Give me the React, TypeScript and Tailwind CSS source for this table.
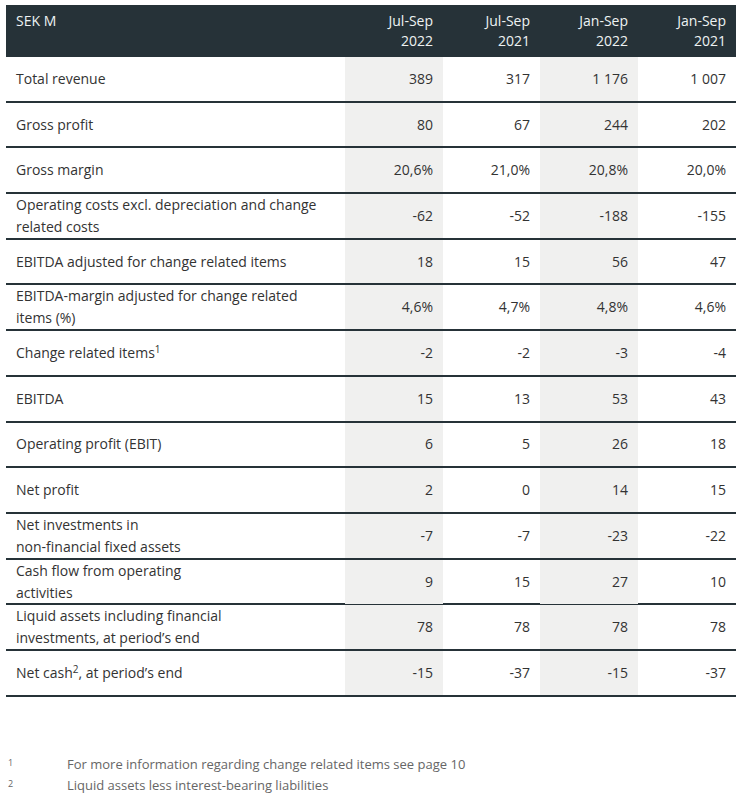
import React from "react";

type Row = { label: React.ReactNode; values: string[] };

const rows: Row[] = [
  { label: "Total revenue", values: ["389", "317", "1 176", "1 007"] },
  { label: "Gross profit", values: ["80", "67", "244", "202"] },
  { label: "Gross margin", values: ["20,6%", "21,0%", "20,8%", "20,0%"] },
  {
    label: (
      <>
        Operating costs excl. depreciation and change
        <br />
        related costs
      </>
    ),
    values: ["-62", "-52", "-188", "-155"],
  },
  { label: "EBITDA adjusted for change related items", values: ["18", "15", "56", "47"] },
  {
    label: (
      <>
        EBITDA-margin adjusted for change related
        <br />
        items (%)
      </>
    ),
    values: ["4,6%", "4,7%", "4,8%", "4,6%"],
  },
  {
    label: (
      <>
        Change related items<sup className="text-[10px]">1</sup>
      </>
    ),
    values: ["-2", "-2", "-3", "-4"],
  },
  { label: "EBITDA", values: ["15", "13", "53", "43"] },
  { label: "Operating profit (EBIT)", values: ["6", "5", "26", "18"] },
  { label: "Net profit", values: ["2", "0", "14", "15"] },
  {
    label: (
      <>
        Net investments in
        <br />
        non-financial fixed assets
      </>
    ),
    values: ["-7", "-7", "-23", "-22"],
  },
  {
    label: (
      <>
        Cash flow from operating
        <br />
        activities
      </>
    ),
    values: ["9", "15", "27", "10"],
  },
  {
    label: (
      <>
        Liquid assets including financial
        <br />
        investments, at period’s end
      </>
    ),
    values: ["78", "78", "78", "78"],
  },
  {
    label: (
      <>
        Net cash<sup className="text-[10px]">2</sup>, at period’s end
      </>
    ),
    values: ["-15", "-37", "-15", "-37"],
  },
];

const headers = [
  ["Jul-Sep", "2022"],
  ["Jul-Sep", "2021"],
  ["Jan-Sep", "2022"],
  ["Jan-Sep", "2021"],
];

const cols = "grid grid-cols-[339px_98px_97px_98px_98px]";

export default function App() {
  return (
    <div
      className="w-[744px] h-[800px] bg-white pt-[5px] pl-[6px] text-[#333]"
      style={{ fontFamily: "'Open Sans', 'Liberation Sans', sans-serif" }}
    >
      <div className="w-[730px]">
        {/* header */}
        <div className={`${cols} h-[52px] bg-[#263238] text-[#eef2f3] text-[14px] leading-[20px]`}>
          <div className="pl-[10px] pt-[6px]">SEK M</div>
          {headers.map((h, i) => (
            <div key={i} className="text-right pr-[10px] pt-[6px]">
              <div>{h[0]}</div>
              <div>{h[1]}</div>
            </div>
          ))}
        </div>

        {/* body */}
        {rows.map((r, i) => (
          <div
            key={i}
            className={`${cols} h-[45.7px] border-b-2 border-[#263238] text-[14px] leading-[22px]`}
          >
            <div className="pl-[10px] flex items-center">
              <div>{r.label}</div>
            </div>
            {r.values.map((v, j) => (
              <div
                key={j}
                className={`flex items-center justify-end pr-[10px] ${
                  j % 2 === 0 ? "bg-[#f0f0ef]" : ""
                }`}
              >
                {v}
              </div>
            ))}
          </div>
        ))}
      </div>

      {/* footnotes */}
      <div className="mt-[57px] text-[13px] leading-[21px] text-[#666]">
        <div className="flex">
          <span className="w-[61px] text-[9px] pl-[2px] -mt-[2px]">1</span>
          <span>For more information regarding change related items see page 10</span>
        </div>
        <div className="flex">
          <span className="w-[61px] text-[9px] pl-[2px] -mt-[2px]">2</span>
          <span>Liquid assets less interest-bearing liabilities</span>
        </div>
      </div>
    </div>
  );
}
